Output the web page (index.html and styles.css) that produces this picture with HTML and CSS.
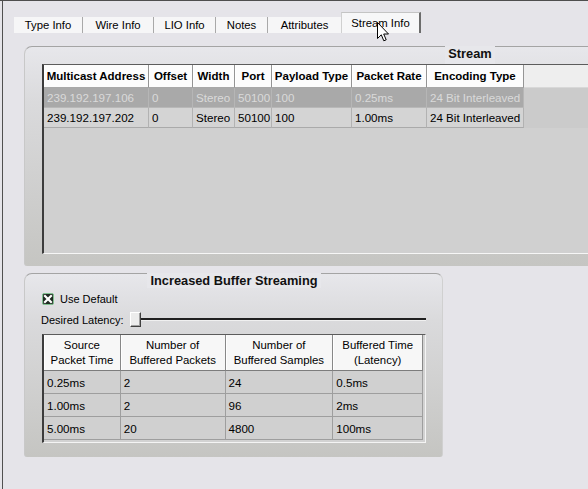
FILE: index.html
```html
<!DOCTYPE html>
<html>
<head>
<meta charset="utf-8">
<link rel="stylesheet" href="styles.css">
</head>
<body>
<div class="window">
  <div class="tabs">
    <div class="tab t1">Type Info</div>
    <div class="tab t2">Wire Info</div>
    <div class="tab t3">LIO Info</div>
    <div class="tab t4">Notes</div>
    <div class="tab t5">Attributes</div>
    <div class="tab active">Stream Info</div>
  </div>
  <div class="content">
    <section class="panel stream">
      <div class="panel-title">Stream</div>
      <div class="grid stream-grid">
        <table>
          <thead>
            <tr>
              <th class="c-addr">Multicast Address</th>
              <th class="c-off">Offset</th>
              <th class="c-wid">Width</th>
              <th class="c-port">Port</th>
              <th class="c-pay">Payload Type</th>
              <th class="c-rate">Packet Rate</th>
              <th class="c-enc">Encoding Type</th>
              <th class="filler"></th>
            </tr>
          </thead>
          <tbody>
            <tr class="sel">
              <td>239.192.197.106</td><td>0</td><td>Stereo</td><td>50100</td><td>100</td><td>0.25ms</td><td>24 Bit Interleaved</td><td class="filler"></td>
            </tr>
            <tr>
              <td>239.192.197.202</td><td>0</td><td>Stereo</td><td>50100</td><td>100</td><td>1.00ms</td><td>24 Bit Interleaved</td><td class="filler"></td>
            </tr>
          </tbody>
        </table>
      </div>
    </section>

    <section class="panel buffer">
      <div class="panel-title">Increased Buffer Streaming</div>
      <div class="check">
        <svg class="box" width="12" height="12" viewBox="0 0 12 12">
          <rect x="0.5" y="0.5" width="11" height="11" rx="1.5" fill="#1f2a22" stroke="#7fbf8f"/>
          <path d="M3 3 L9 9 M9 3 L3 9" stroke="#ffffff" stroke-width="2.2" stroke-linecap="square"/>
        </svg>
        <span>Use Default</span>
      </div>
      <div class="latency">
        <span>Desired Latency:</span>
        <div class="slider">
          <div class="thumb"></div>
          <div class="track"></div>
        </div>
      </div>
      <div class="grid buffer-grid">
        <table>
          <thead>
            <tr>
              <th class="b1">Source<br>Packet Time</th>
              <th class="b2">Number of<br>Buffered Packets</th>
              <th class="b3">Number of<br>Buffered Samples</th>
              <th class="b4">Buffered Time<br>(Latency)</th>
            </tr>
          </thead>
          <tbody>
            <tr><td>0.25ms</td><td>2</td><td>24</td><td>0.5ms</td></tr>
            <tr><td>1.00ms</td><td>2</td><td>96</td><td>2ms</td></tr>
            <tr><td>5.00ms</td><td>20</td><td>4800</td><td>100ms</td></tr>
          </tbody>
        </table>
      </div>
    </section>
  </div>
</div>
<svg class="cursor" width="13" height="21" viewBox="0 0 13 21">
  <path d="M0.5 0.5 L0.5 16.5 L4.3 12.8 L6.8 18.8 L9.2 17.8 L6.7 12 L11.5 12 Z" fill="#ffffff" stroke="#000000" stroke-width="1" stroke-linejoin="miter"/>
</svg>
</body>
</html>
```
FILE: styles.css
```css
html, body {
  margin: 0;
  padding: 0;
}
body {
  width: 588px;
  height: 489px;
  overflow: hidden;
  background: #e5e4e9;
  border-top: 1px solid #4e4e4e;
  box-sizing: border-box;
  font-family: "Liberation Sans", Arial, sans-serif;
  font-size: 11px;
  color: #000;
  position: relative;
}
.window {
  margin-left: 2px;
  border-left: 1px solid #505050;
  height: 488px;
  box-sizing: border-box;
}
.tabs {
  display: flex;
  align-items: flex-end;
  padding-top: 11px;
  padding-left: 11px;
  height: 21px;
}
.tab {
  height: 16px;
  line-height: 17px;
  font-size: 11.3px;
  background: #f6f6f7;
  border-right: 1px solid #a9a9a9;
  text-align: center;
  box-sizing: border-box;
  flex: none;
}
.t1 { width: 69px; }
.t2 { width: 71px; }
.t3 { width: 62px; }
.t4 { width: 52px; }
.t5 { width: 74px; }
.tab.active {
  width: 80px;
  height: 21px;
  line-height: 21px;
  background: #f7f7f8;
  border-top: 1px solid #c4c4c4;
  border-left: 1px solid #d0d0d0;
  border-right: 2px solid #6c6c6c;
  margin-left: -1px;
}
.content {
  display: flex;
  flex-direction: column;
  padding-left: 21px;
  padding-top: 13px;
}
.panel {
  box-sizing: border-box;
  background: linear-gradient(#e7e7eb, #dadadc 25%, #c5c5c2);
  border-top: 1px solid #a4a4a4;
  border-left: 1px solid #c8c8c8;
  border-radius: 8px 7px 3px 3px;
  padding: 0 16px 0 17px;
  display: flex;
  flex-direction: column;
}
.panel-title {
  align-self: center;
  font-weight: bold;
  font-size: 12.8px;
  line-height: 14px;
  margin-top: -1px;
  padding: 1px 3px 0;
  background: #e7e7eb;
  color: #111;
}
.stream {
  width: 890px;
  height: 220px;
}
.stream .panel-title {
  height: 18px;
  box-sizing: border-box;
  padding-top: 1px;
}
.buffer {
  width: 419px;
  height: 184px;
  margin-top: 7px;
  border-right: 1px solid #d0d0d0;
}
.grid {
  border-left: 2px solid #3c3c3c;
  border-top: 1px solid #5c5c5c;
  box-sizing: border-box;
}
.grid table {
  border-collapse: separate;
  border-spacing: 0;
  table-layout: fixed;
}
.grid th, .grid td {
  box-sizing: border-box;
  padding: 0 0 0 3px;
  white-space: nowrap;
  overflow: hidden;
  font-size: 11.6px;
}
.stream-grid {
  height: 190px;
  background: #d0d0d0;
  border-bottom: 1px solid #f6f6f6;
}
.stream-grid table {
  width: 100%;
}
.stream-grid th {
  height: 23px;
  background: #fcfcfc;
  font-weight: bold;
  font-size: 11.5px;
  text-align: center;
  padding: 0;
  border-right: 1px solid #959595;
  border-bottom: 1px solid #a8a8a8;
  box-shadow: inset 1px 0 0 #ffffff;
}
.stream-grid th.filler {
  background: #eeeeee;
  border: none;
  border-bottom: 1px solid #d8d8d8;
  box-shadow: none;
}
.c-addr { width: 105px; }
.c-off { width: 44px; }
.c-wid { width: 42px; }
.c-port { width: 37px; }
.c-pay { width: 80px; }
.c-rate { width: 75px; }
.c-enc { width: 97px; }
.stream-grid td {
  height: 20px;
  background: #d4d4d4;
  border-right: 1px solid #b2b2b2;
  border-bottom: 1px solid #aaaaaa;
}
.stream-grid tr.sel td {
  background: #a9a9a9;
  color: #dadada;
  border-right-color: #b6b6b6;
  border-bottom-color: #b8b8b8;
}
.stream-grid td.filler,
.stream-grid tr.sel td.filler {
  background: #cbcbcb;
  border: none;
}
.check {
  display: flex;
  align-items: center;
  gap: 6px;
  margin-top: 5px;
  height: 12px;
}
.check .box { flex: none; }
.latency {
  display: flex;
  align-items: center;
  margin-top: 7px;
  height: 15px;
  margin-left: -1px;
}
.latency span {
  flex: none;
  margin-right: 6px;
}
.slider {
  flex: 1;
  display: flex;
  align-items: center;
  height: 15px;
}
.thumb {
  flex: none;
  width: 11px;
  height: 15px;
  box-sizing: border-box;
  background: #ececec;
  border-top: 1px solid #ffffff;
  border-left: 1px solid #ffffff;
  border-right: 1px solid #404040;
  border-bottom: 1px solid #404040;
  box-shadow: inset -1px -1px 0 #a0a0a0;
}
.track {
  flex: 1;
  height: 2px;
  background: #202020;
  border-bottom: 1px solid #f0f0f0;
}
.buffer-grid {
  align-self: flex-start;
  margin-top: 7px;
  margin-left: 0;
  background: #d2d2d2;
  border-right: 1px solid #f4f4f4;
  border-bottom: 1px solid #f4f4f4;
  padding: 0 2px 2px 0;
}
.buffer-grid th {
  height: 36px;
  background: #f7f7f7;
  font-weight: normal;
  font-size: 11.4px;
  text-align: center;
  line-height: 15px;
  padding: 0;
  border-right: 1px solid #888888;
  border-bottom: 1px solid #7c7c7c;
  box-shadow: inset 1px 0 0 #ffffff;
}
.b1 { width: 77px; }
.b2 { width: 105px; }
.b3 { width: 108px; }
.b4 { width: 90px; }
.buffer-grid td {
  height: 23px;
  background: #d0d0d0;
  border-right: 1px solid #9e9e9e;
  border-bottom: 1px solid #9e9e9e;
}
.cursor {
  position: absolute;
  left: 377px;
  top: 21px;
}
```
